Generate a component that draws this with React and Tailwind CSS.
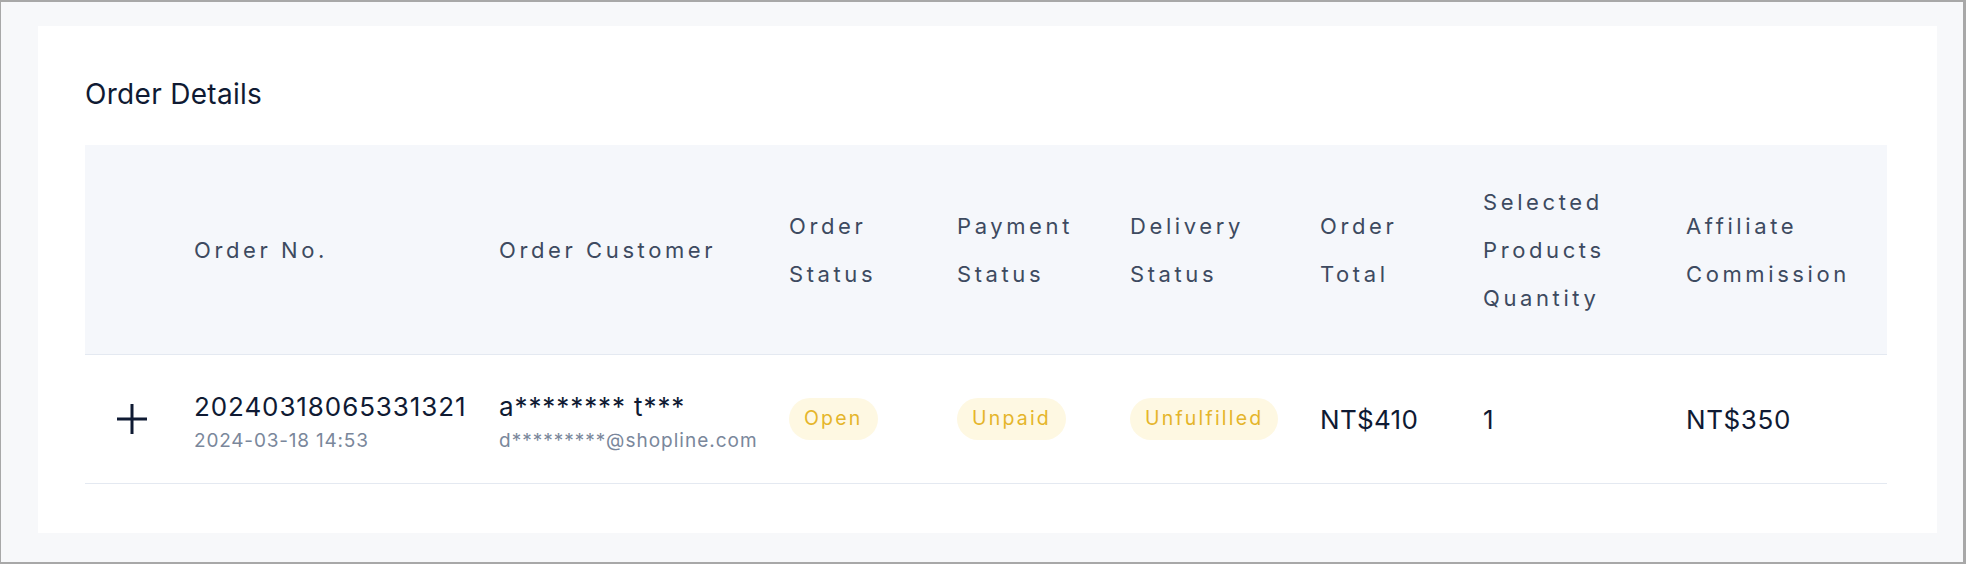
import React from "react";

const headers = [
  [],
  ["Order No."],
  ["Order Customer"],
  ["Order", "Status"],
  ["Payment", "Status"],
  ["Delivery", "Status"],
  ["Order", "Total"],
  ["Selected", "Products", "Quantity"],
  ["Affiliate", "Commission"],
];

const cols =
  "grid grid-cols-[93px_305px_290px_168px_173px_190px_163px_203px_217px]";

const Badge = ({ label }) => (
  <span className="inline-flex h-[42px] items-center rounded-full bg-[#fef8e2] px-[15px] text-[19.5px] tracking-[2.2px] text-[#e5b52a]">
    {label}
  </span>
);

const PlusIcon = () => (
  <svg width="30" height="30" viewBox="0 0 30 30" className="text-[#0f1a33]">
    <path d="M0 15h30M15 0v30" stroke="currentColor" strokeWidth="3" />
  </svg>
);

export default function App() {
  return (
    <div
      className="flex h-[564px] w-full border border-t-2 border-b-2 border-r-[3px] border-[#a8a8a8] bg-[#f7f8fa] pl-[37px] pr-[26px] pt-[24px] pb-[29px]"
      style={{ fontFamily: "Inter, 'Noto Sans', sans-serif" }}
    >
      <div className="flex-1 bg-white pl-[47px] pr-[50px] pt-[50px] pb-[49px]">
        {/* Title */}
        <h2 className="text-[28px] leading-[36px] tracking-[0.3px] text-[#0f1a33]">
          Order Details
        </h2>

        <div className="mt-[33px]">
          {/* Header */}
          <div className={`${cols} h-[210px] border-b border-[#e4e9f1] bg-[#f5f7fb]`}>
            {headers.map((lines, i) => (
              <div key={i} className="flex flex-col justify-center px-4">
                {lines.map((l) => (
                  <span
                    key={l}
                    className="text-[22px] leading-[48px] tracking-[3.6px] text-[#3d4a60]"
                  >
                    {l}
                  </span>
                ))}
              </div>
            ))}
          </div>

          {/* Row */}
          <div
            className={`${cols} h-[129px] border-b border-[#e4e9f1] text-[#0f1a33] tracking-[0.9px]`}
          >
            <div className="flex items-center justify-center">
              <PlusIcon />
            </div>
            <div className="flex flex-col justify-center px-4 pt-[5px]">
              <span className="text-[26px] leading-[34px]">20240318065331321</span>
              <span className="mt-[5px] text-[19px] leading-[24px] tracking-[0.8px] text-[#7a879b]">
                2024-03-18 14:53
              </span>
            </div>
            <div className="flex flex-col justify-center px-4 pt-[5px]">
              <span className="text-[26px] leading-[34px]">a******** t***</span>
              <span className="mt-[5px] text-[19px] leading-[24px] tracking-[1px] text-[#7a879b]">
                d*********@shopline.com
              </span>
            </div>
            <div className="flex items-center px-4">
              <Badge label="Open" />
            </div>
            <div className="flex items-center px-4">
              <Badge label="Unpaid" />
            </div>
            <div className="flex items-center px-4">
              <Badge label="Unfulfilled" />
            </div>
            <div className="flex items-center px-4 text-[26px] tracking-[0.3px]">NT$410</div>
            <div className="flex items-center px-4 text-[26px]">1</div>
            <div className="flex items-center px-4 text-[26px] tracking-[0.6px]">NT$350</div>
          </div>
        </div>
      </div>
    </div>
  );
}
